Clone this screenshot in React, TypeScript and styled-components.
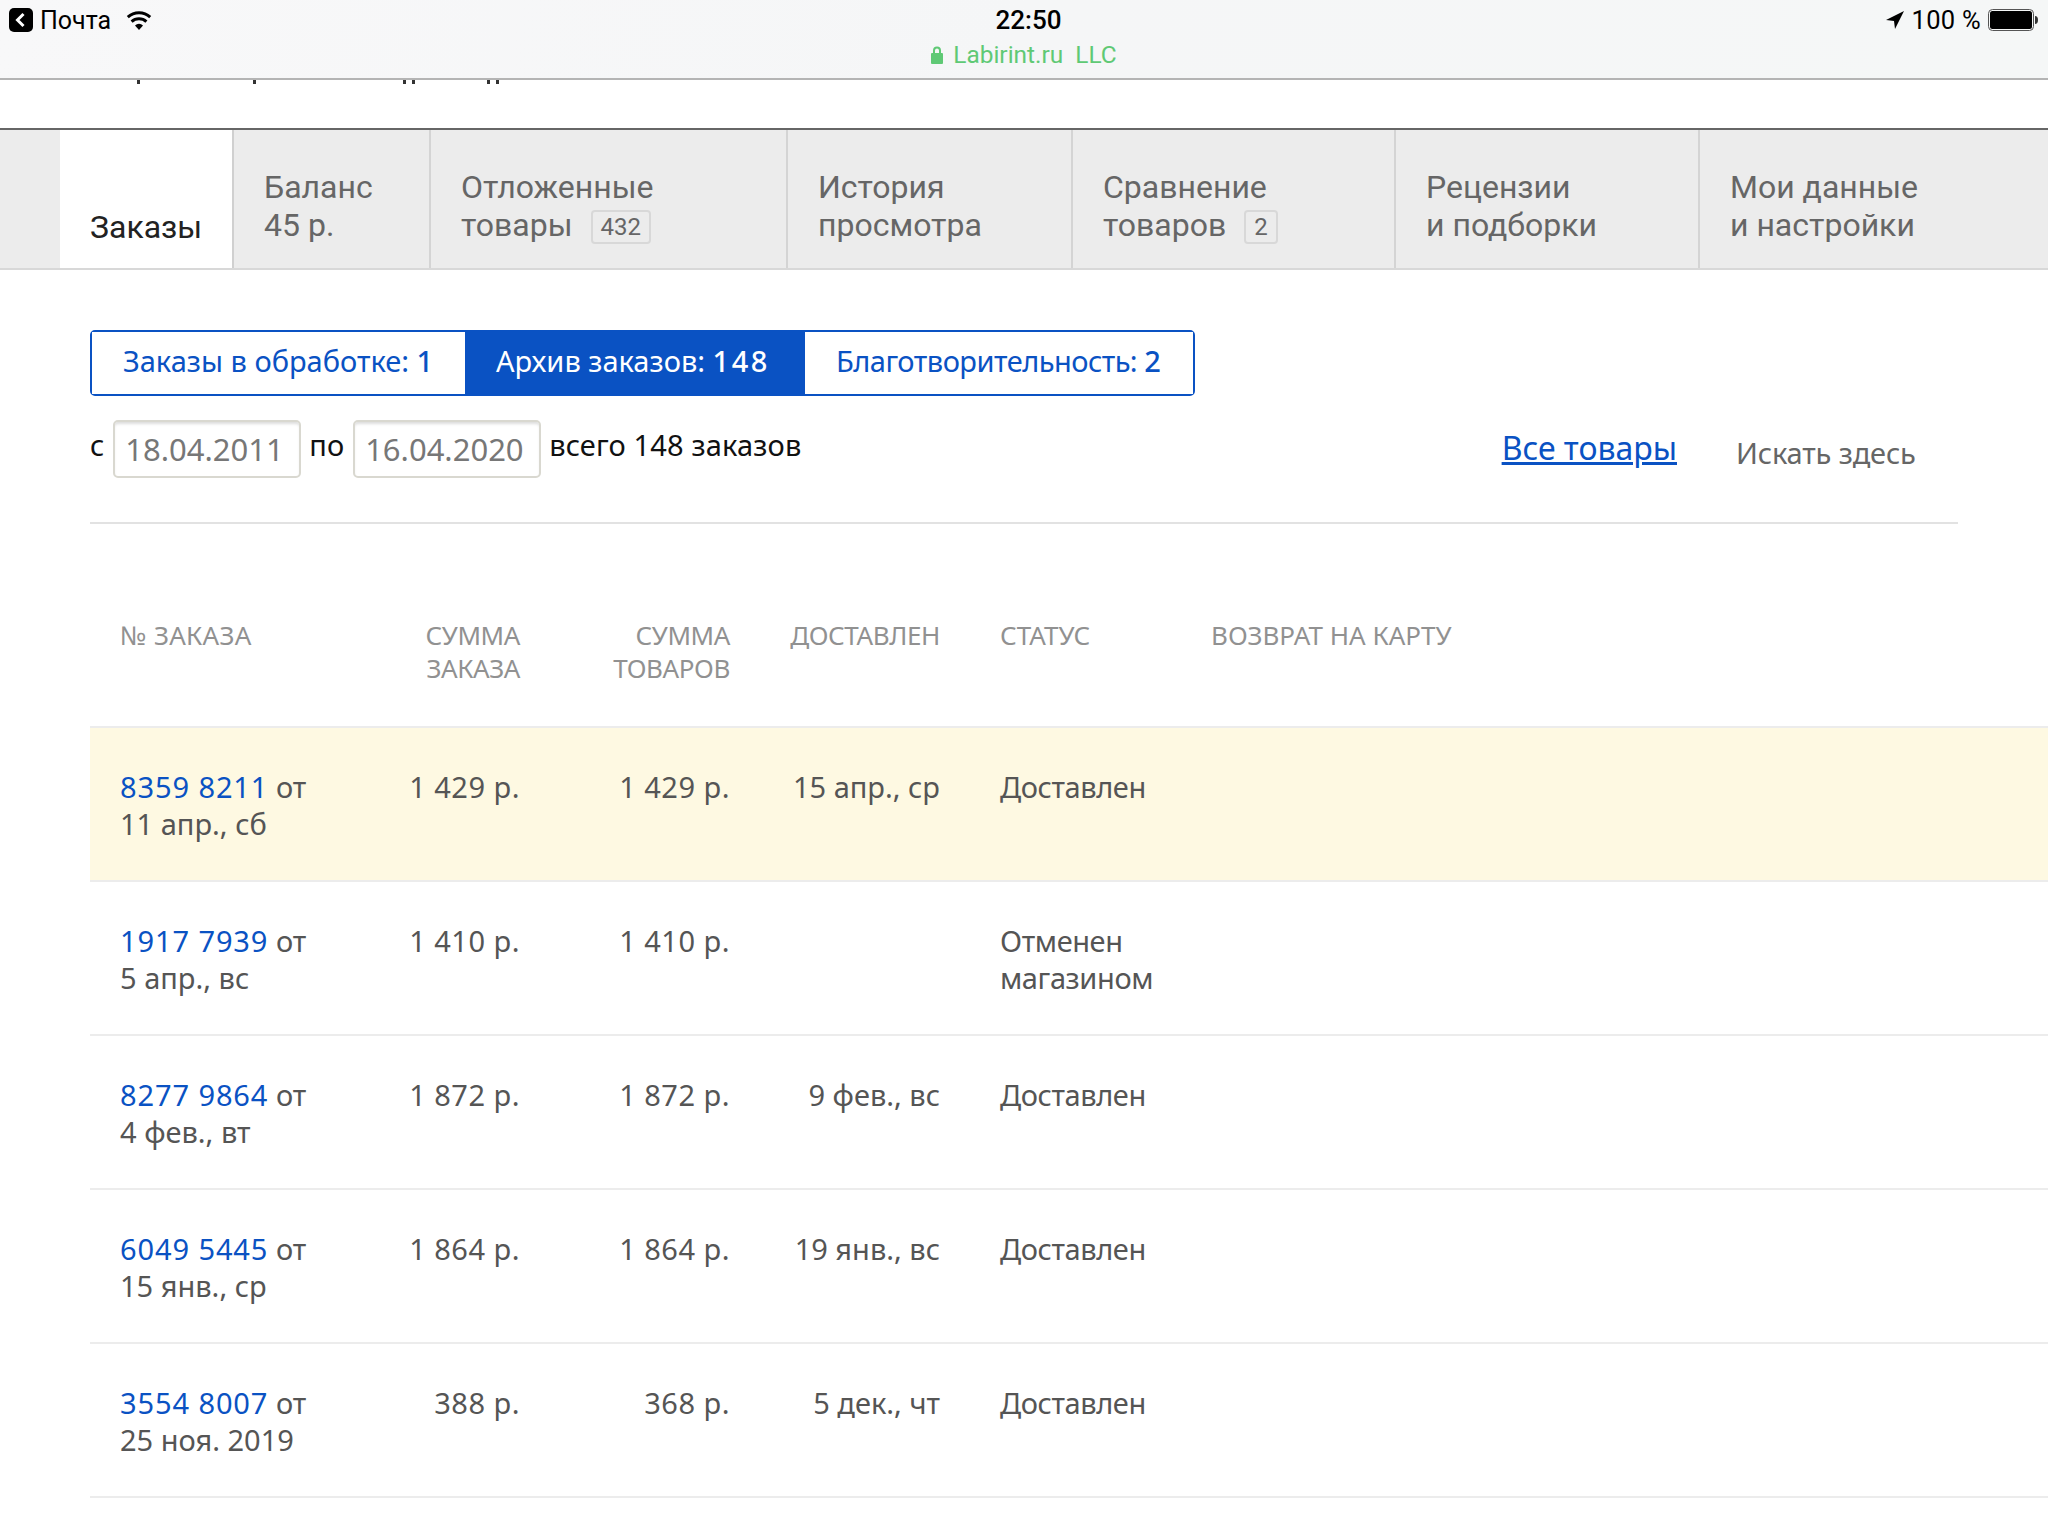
import React from "react";
import styled, { createGlobalStyle } from "styled-components";

const Global = createGlobalStyle`
  html, body { margin: 0; padding: 0; background: #fff; width: 2048px; height: 1536px; overflow: hidden; }
  * { box-sizing: border-box; }
`;

const Page = styled.div`
  width: 2048px;
  height: 1536px;
  overflow: hidden;
  font-family: "Noto Sans", sans-serif;
  color: #555;
`;

const StatusBar = styled.header`
  height: 80px;
  border-bottom: 2px solid #b4b4b4;
  background: linear-gradient(100deg, #f8f8f9 0%, #f5f6f7 50%, #f5f7f7 100%);
  display: grid;
  grid-template-columns: 1fr auto 1fr;
  padding: 0 10px 0 9px;
  font-family: Roboto, sans-serif;
  color: #000;
`;

const StatusLeft = styled.div`
  display: flex;
  align-items: center;
  height: 40px;
  font-size: 25px;
  gap: 7px;
`;

const Carrier = styled.span`
  margin-right: 8px;
`;

const StatusCenter = styled.div`
  display: flex;
  flex-direction: column;
  align-items: center;
  padding: 5px 0 0 10px;
`;

const Clock = styled.div`
  font-size: 26px;
  font-weight: 500;
  line-height: 30px;
  margin-bottom: 5px;
`;

const Secure = styled.div`
  display: flex;
  align-items: center;
  gap: 10px;
  margin-right: 9px;
  font-size: 24.400px;
  line-height: 30px;
  color: #5fc975;
  white-space: pre;
`;

const StatusRight = styled.div`
  display: flex;
  align-items: center;
  justify-content: flex-end;
  height: 40px;
  font-size: 25.500px;
  letter-spacing: 0.3px;
  gap: 7px;
`;

const CutText = styled.div`
  display: flex;
  height: 48px;
  padding-left: 137px;
`;

const Tick = styled.span<{ $gap: number }>`
  width: 3px;
  height: 4px;
  margin-right: ${(p) => p.$gap}px;
  background: #333;
`;

const Tabs = styled.nav`
  display: flex;
  height: 142px;
  padding-left: 60px;
  overflow: hidden;
  background: #ececec;
  border-top: 2px solid #666;
  border-bottom: 2px solid #d8d8d8;
  font-family: Roboto, sans-serif;
`;

const Tab = styled.div<{ $w: number; $active?: boolean }>`
  flex: 0 0 ${(p) => p.$w}px;
  height: ${(p) => (p.$active ? 140 : 138)}px;
  padding: ${(p) => (p.$active ? "78px 0 0 30px" : "38px 0 0 30px")};
  border-right: 2px solid ${(p) => (p.$active ? "#d0d0d0" : "#d4d4d4")};
  background: ${(p) => (p.$active ? "#fff" : "transparent")};
  color: ${(p) => (p.$active ? "#222" : "#666")};
  font-size: 32px;
  line-height: 38px;
  white-space: pre;
`;

const Count = styled.span`
  display: inline-block;
  margin-left: 18px;
  padding: 0 8px;
  height: 34px;
  border: 2px solid #d8d8d8;
  border-radius: 4px;
  font-size: 24px;
  line-height: 30px;
  vertical-align: 1px;
`;

const Content = styled.main`
  padding: 60px 0 0 90px;
`;

const Segments = styled.div`
  display: inline-flex;
  height: 66px;
  border: 2px solid #0a52c3;
  border-radius: 5px;
`;

const Segment = styled.div<{ $active?: boolean; $w: number; $tight?: boolean }>`
  width: ${(p) => p.$w}px;
  padding-left: 31px;
  font-size: 29px;
  line-height: 58px;
  white-space: nowrap;
  letter-spacing: ${(p) => (p.$tight ? "-0.5px" : "0")};
  color: ${(p) => (p.$active ? "#fff" : "#0a52c3")};
  background: ${(p) => (p.$active ? "#0a52c3" : "#fff")};
`;

const SegmentCount = styled.span`
  letter-spacing: 2.500px;
  font-weight: 500;
`;

const Filter = styled.div`
  display: flex;
  width: 1868px;
  height: 104px;
  margin-top: 24px;
  border-bottom: 2px solid #e2e2e2;
  font-size: 29px;
  color: #111;
`;

const Word = styled.span<{ $wide?: boolean }>`
  margin: 5px 9px 0 0;
  line-height: 40px;
  letter-spacing: ${(p) => (p.$wide ? "0.15px" : "0")};
`;

const DateField = styled.div`
  width: 188px;
  height: 58px;
  margin-right: 8px;
  padding-left: 10px;
  border: 2px solid #d9d8d0;
  border-radius: 5px;
  box-shadow: inset 0 3px 3px -1px #ddd;
  color: #777;
  font-size: 31px;
  line-height: 54px;
`;

const AllGoods = styled.span`
  margin-left: auto;
  margin-top: 5px;
  font-size: 32px;
  line-height: 46px;
  color: #0a52c3;
  text-decoration: underline;
`;

const Search = styled.span`
  width: 222px;
  margin: 13px 0 0 59px;
  font-size: 29px;
  letter-spacing: -0.15px;
  line-height: 40px;
  color: #666;
`;

const columns = "grid-template-columns: 230px 200px 210px 210px 271px 1fr;";

const HeadRow = styled.div`
  display: grid;
  ${columns}
  height: 204px;
  padding-top: 95px;
  border-bottom: 2px solid #ececec;
  font-size: 26px;
  line-height: 33px;
  color: #919191;
`;

const Head = styled.div<{ $right?: boolean }>`
  text-align: ${(p) => (p.$right ? "right" : "left")};
  letter-spacing: ${(p) => (p.$right ? "-0.4px" : "0")};
  white-space: pre;
`;

const HeadFirst = styled(Head)`
  padding-left: 30px;
  letter-spacing: 0.3px;
`;

const HeadStatus = styled(Head)`
  padding-left: 60px;
`;

const Row = styled.div<{ $new?: boolean }>`
  display: grid;
  ${columns}
  height: 154px;
  padding-top: 40px;
  border-bottom: 2px solid #ececec;
  background: ${(p) => (p.$new ? "#fef9e2" : "#fff")};
  font-size: 29px;
  line-height: 37px;
  color: #555;
`;

const OrderCell = styled.div`
  padding-left: 30px;
  white-space: nowrap;
`;

const OrderNo = styled.span`
  color: #0a52c3;
  letter-spacing: 0.9px;
`;

const Right = styled.div`
  text-align: right;
  white-space: nowrap;
`;

const Money = styled(Right)`
  letter-spacing: 0.5px;
`;

const Status = styled.div`
  padding-left: 60px;
  letter-spacing: -0.4px;
  white-space: pre;
`;

const orders = [
  { no: "8359 8211", date: "11 апр., сб", sum: "1 429 р.", goods: "1 429 р.", del: "15 апр., ср", st: "Доставлен", isNew: true },
  { no: "1917 7939", date: "5 апр., вс", sum: "1 410 р.", goods: "1 410 р.", del: "", st: "Отменен\nмагазином" },
  { no: "8277 9864", date: "4 фев., вт", sum: "1 872 р.", goods: "1 872 р.", del: "9 фев., вс", st: "Доставлен" },
  { no: "6049 5445", date: "15 янв., ср", sum: "1 864 р.", goods: "1 864 р.", del: "19 янв., вс", st: "Доставлен" },
  { no: "3554 8007", date: "25 ноя. 2019", sum: "388 р.", goods: "368 р.", del: "5 дек., чт", st: "Доставлен" },
];

const BackIcon = () => (
  <svg width="24" height="24" viewBox="0 0 24 24">
    <rect width="24" height="24" rx="5" fill="#000" />
    <path d="M14.500 6 8.500 12l6 6" fill="none" stroke="#fff" strokeWidth="3" />
  </svg>
);

const WifiIcon = () => (
  <svg width="26" height="20" viewBox="0 0 26 20">
    <path d="M13 20 9 15.400a6 6 0 0 1 8 0Z" fill="#000" />
    <path d="M5.600 11.600a11 11 0 0 1 14.800 0M1.800 7.200a16.600 16.600 0 0 1 22.400 0" fill="none" stroke="#000" strokeWidth="3" />
  </svg>
);

const ArrowIcon = () => (
  <svg width="20" height="20" viewBox="0 0 20 20">
    <path d="M19 1 1 10l8 1 1 8Z" fill="#000" />
  </svg>
);

const BatteryIcon = () => (
  <svg width="50" height="22" viewBox="0 0 50 22">
    <rect x=".5" y=".5" width="45" height="21" rx="4" fill="none" stroke="#555" />
    <rect x="2" y="2" width="42" height="18" rx="2.500" fill="#000" />
    <path d="M47 7c2 0 3 1.500 3 4s-1 4-3 4Z" fill="#333" />
  </svg>
);

const LockIcon = () => (
  <svg width="12" height="18" viewBox="0 0 12 18">
    <rect y="7" width="12" height="11" rx="1" fill="#5fc975" />
    <path d="M3 8V4.500a3 3 0 0 1 6 0V8" fill="none" stroke="#5fc975" strokeWidth="2" />
  </svg>
);

export default function App() {
  return (
    <Page>
      <Global />
      <StatusBar>
        <StatusLeft>
          <BackIcon />
          <Carrier>Почта</Carrier>
          <WifiIcon />
        </StatusLeft>
        <StatusCenter>
          <Clock>22:50</Clock>
          <Secure>
            <LockIcon />
            {"Labirint.ru  LLC"}
          </Secure>
        </StatusCenter>
        <StatusRight>
          <ArrowIcon />
          <span>100 %</span>
          <BatteryIcon />
        </StatusRight>
      </StatusBar>
      <CutText>
        <Tick $gap={113} />
        <Tick $gap={147} />
        <Tick $gap={6} />
        <Tick $gap={72} />
        <Tick $gap={6} />
        <Tick $gap={0} />
      </CutText>
      <Tabs>
        <Tab $w={174} $active>Заказы</Tab>
        <Tab $w={197}>{"Баланс\n45 р."}</Tab>
        <Tab $w={357}>{"Отложенные\nтовары"}<Count>432</Count></Tab>
        <Tab $w={285}>{"История\nпросмотра"}</Tab>
        <Tab $w={323}>{"Сравнение\nтоваров"}<Count>2</Count></Tab>
        <Tab $w={304}>{"Рецензии\nи подборки"}</Tab>
        <Tab $w={360}>{"Мои данные\nи настройки"}</Tab>
      </Tabs>
      <Content>
        <Segments>
          <Segment $w={373}>Заказы в обработке: <SegmentCount>1</SegmentCount></Segment>
          <Segment $w={340} $active>Архив заказов: <SegmentCount>148</SegmentCount></Segment>
          <Segment $w={388} $tight>Благотворительность: <SegmentCount>2</SegmentCount></Segment>
        </Segments>
        <Filter>
          <Word>с</Word>
          <DateField>18.04.2011</DateField>
          <Word>по</Word>
          <DateField>16.04.2020</DateField>
          <Word $wide>всего 148 заказов</Word>
          <AllGoods>Все товары</AllGoods>
          <Search>Искать здесь</Search>
        </Filter>
        <HeadRow>
          <HeadFirst>№ ЗАКАЗА</HeadFirst>
          <Head $right>{"СУММА\nЗАКАЗА"}</Head>
          <Head $right>{"СУММА\nТОВАРОВ"}</Head>
          <Head $right>ДОСТАВЛЕН</Head>
          <HeadStatus>СТАТУС</HeadStatus>
          <Head>ВОЗВРАТ НА КАРТУ</Head>
        </HeadRow>
        {orders.map((o) => (
          <Row key={o.no} $new={o.isNew}>
            <OrderCell>
              <OrderNo>{o.no}</OrderNo> от
              <br />
              {o.date}
            </OrderCell>
            <Money>{o.sum}</Money>
            <Money>{o.goods}</Money>
            <Right>{o.del}</Right>
            <Status>{o.st}</Status>
            <div />
          </Row>
        ))}
      </Content>
    </Page>
  );
}
